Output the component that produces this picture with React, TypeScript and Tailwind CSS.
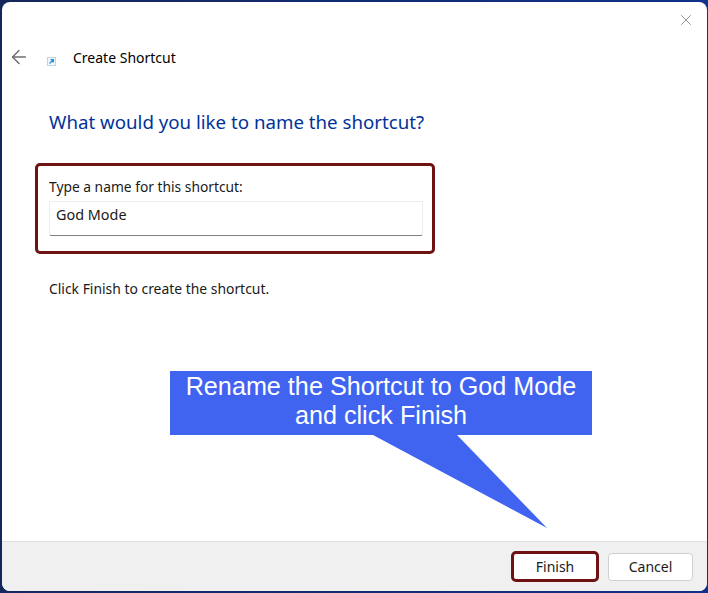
import { ArrowLeft, X } from 'lucide-react';

const UI_FONT = "font-['Noto_Sans','Open_Sans',sans-serif]";

function ShortcutIcon() {
  return (
    <svg className="mt-[8px] ml-[17px] h-[9px] w-[9px] shrink-0" viewBox="0 0 9 9">
      <rect x="0.5" y="0.5" width="8" height="8" fill="#f3f8fc" stroke="#c5d3df" />
      <path d="M2.5 6.5 L6 3 M3.6 2.6 H6.4 V5.4" fill="none" stroke="#1f8fd8" strokeWidth="1.2" />
    </svg>
  );
}

function Callout() {
  return (
    <div className="absolute top-[371px] left-[170px] w-[422px]">
      <div className="flex h-[64px] flex-col items-center bg-[#4064f0] pt-[1px] font-['Liberation_Sans',Arial,sans-serif] text-[25.2px] leading-[29px] text-white">
        <span>Rename the Shortcut to God Mode</span>
        <span>and click Finish</span>
      </div>
      <svg className="absolute top-[64px] left-[203px] h-[93px] w-[174px]" viewBox="0 0 174 93">
        <polygon points="0,0 84,0 174,93" fill="#4064f0" />
      </svg>
    </div>
  );
}

export default function App() {
  return (
    <div className={`relative h-[593px] w-[708px] bg-gradient-to-r from-[#14265c] to-[#10318a] pt-[2px] pr-[1px] pb-[2px] pl-[2px] ${UI_FONT}`}>
      <div className="flex h-full flex-col overflow-hidden rounded-[8px] bg-white text-[14px] text-[#1a1a1a]">
        <div className="flex h-[10px] justify-end">
          <X className="mt-[9px] mr-[12px] h-[18px] w-[18px] shrink-0 text-[#8a8a8a]" strokeWidth={1.2} />
        </div>

        <div className="flex-1 pt-[33px]">
          <div className="flex h-[24px] items-center pl-[6px]">
            <ArrowLeft className="h-[22px] w-[22px] shrink-0 text-[#6e6e6e]" strokeWidth={1.6} />
            <ShortcutIcon />
            <span className="ml-[17px] text-black">Create Shortcut</span>
          </div>

          <h1 className="mt-[39px] ml-[47px] text-[18.7px] leading-[28px] text-[#003399]">
            What would you like to name the shortcut?
          </h1>

          <div className="mt-[27px] ml-[33px] h-[91px] w-[400px] rounded-[5px] border-[3px] border-[#6f1214] pt-[11px] pl-[11px]">
            <p className="text-[13.8px] leading-[20px]">Type a name for this shortcut:</p>
            <div className="mt-[4px] h-[35px] w-[374px] rounded-[2px] border border-[#ececec] border-b-[#808080] pt-[3px] pl-[6px] text-[14.4px] leading-[20px]">
              God Mode
            </div>
          </div>

          <p className="mt-[25px] ml-[47px] text-[13.9px] leading-[20px]">Click Finish to create the shortcut.</p>
        </div>

        <div className="flex h-[50px] items-center justify-end border-t border-[#dfdfdf] bg-[#f0f0f0] pr-[14px]">
          <button className="h-[31px] w-[88px] rounded-[5px] border-[3px] border-[#6f1214] bg-white">Finish</button>
          <button className="ml-[9px] h-[28px] w-[85px] rounded-[4px] border border-[#d0d0d0] bg-white">Cancel</button>
        </div>
      </div>
      <Callout />
    </div>
  );
}
